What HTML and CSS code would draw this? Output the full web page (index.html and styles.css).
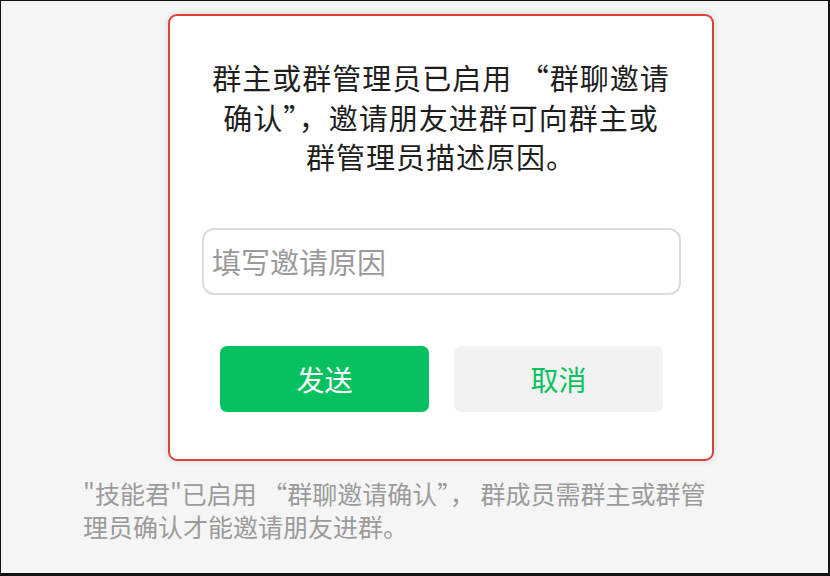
FILE: index.html
```html
<!DOCTYPE html>
<html lang="zh-CN">
  <head>
    <meta charset="utf-8" />
    <meta name="viewport" content="width=device-width, initial-scale=1" />
    <title>群聊邀请确认</title>
    <link rel="stylesheet" href="styles.css">
  </head>
  <body>
    <div class="frame">
      <div class="dialog">
        <div class="dialog-text">群主或群管理员已启用 “群聊邀请确认”，邀请朋友进群可向群主或群管理员描述原因。</div>
        <input class="reason-input" type="text" placeholder="填写邀请原因" />
        <div class="dialog-actions">
          <button class="btn btn-send">发送</button>
          <button class="btn btn-cancel">取消</button>
        </div>
      </div>
      <div class="notice">"技能君"已启用 “群聊邀请确认”，&nbsp;群成员需群主或群管理员确认才能邀请朋友进群。</div>
    </div>
  </body>
</html>
```

FILE: styles.css
```css
/* Reset */
body, html {
  margin: 0;
  padding: 0;
  font-family: "Noto Sans CJK SC", "Noto Sans", sans-serif;
}
* {
  box-sizing: border-box;
}
.frame {
  width: 830px;
  height: 576px;
  background: #f5f5f5;
  border-style: solid;
  border-color: #111;
  border-width: 1px 2px 3px 1px;
  padding: 13px 0 0 167px;
}
.dialog {
  width: 546px;
  height: 447px;
  background: #fff;
  border: 2px solid #d6453d;
  border-radius: 9px;
  box-shadow: 0 0 6px rgba(0, 0, 0, 0.12);
  padding: 42px 0 0 0;
}
.dialog-text {
  width: 462px;
  margin: 0 auto;
  text-align: center;
  font-size: 29px;
  letter-spacing: 1px;
  line-height: 39.5px;
  color: #1e1e1e;
}
.reason-input {
  display: block;
  width: 479px;
  height: 67px;
  margin: 51px 0 0 32px;
  padding: 0 8px;
  border: 2px solid #dcdcdc;
  border-radius: 12px;
  font-family: inherit;
  font-size: 29px;
  color: #333;
  outline: none;
}
.reason-input::placeholder {
  color: #9a9a9a;
}
.dialog-actions {
  display: flex;
  gap: 25px;
  margin: 51px 0 0 50px;
}
.btn {
  width: 209px;
  height: 66px;
  border: none;
  border-radius: 7px;
  font-family: inherit;
  font-size: 28px;
  cursor: pointer;
}
.btn-send {
  background: #07c160;
  color: #fff;
}
.btn-cancel {
  background: #f2f2f2;
  color: #07c160;
}
.notice {
  width: 640px;
  margin: 16px 0 0 -85px;
  font-size: 25px;
  line-height: 33px;
  color: #9b9b9b;
}
```
